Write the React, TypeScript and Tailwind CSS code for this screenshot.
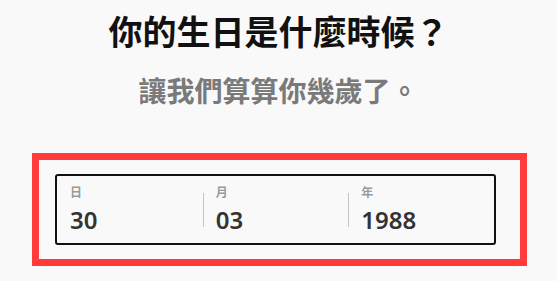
import React from "react";

const fields = [
  { label: "日", value: "30" },
  { label: "月", value: "03" },
  { label: "年", value: "1988" },
];

const BirthdayPrompt: React.FC = () => {
  return (
    <div
      className="min-h-screen bg-[#f9f9f9] pt-3"
      style={{ fontFamily: '"Noto Sans", "Noto Sans CJK TC", sans-serif' }}
    >
      <h1 className="text-center text-[34px] leading-[40px] font-bold text-[#111]">
        你的生日是什麼時候？
      </h1>
      <p className="mt-[21px] text-center text-[28px] leading-[36px] font-semibold text-[#7a7a7a]">
        讓我們算算你幾歲了。
      </p>

      {/* highlighted date input */}
      <div className="mt-[44px] ml-[32px] w-[495px] border-[7px] border-[#ff3b3b] pl-4 py-[14px]">
        <div className="flex w-[441px] rounded-[3px] border-2 border-[#111]">
          {fields.map((f, i) => (
            <div key={f.label} className="flex flex-1">
              <div
                className={`mt-[17px] h-[34px] w-px ${i === 0 ? "bg-transparent" : "bg-[#c4c4c4]"}`}
              />
              <div className="pl-3 pt-[9px] pb-2">
                <div className="text-[12px] leading-4 font-semibold text-[#9a9a9a]">
                  {f.label}
                </div>
                <div className="mt-1 text-[24px] leading-[30px] font-semibold text-[#333]">
                  {f.value}
                </div>
              </div>
            </div>
          ))}
        </div>
      </div>
    </div>
  );
};

export default function App() {
  return <BirthdayPrompt />;
}
